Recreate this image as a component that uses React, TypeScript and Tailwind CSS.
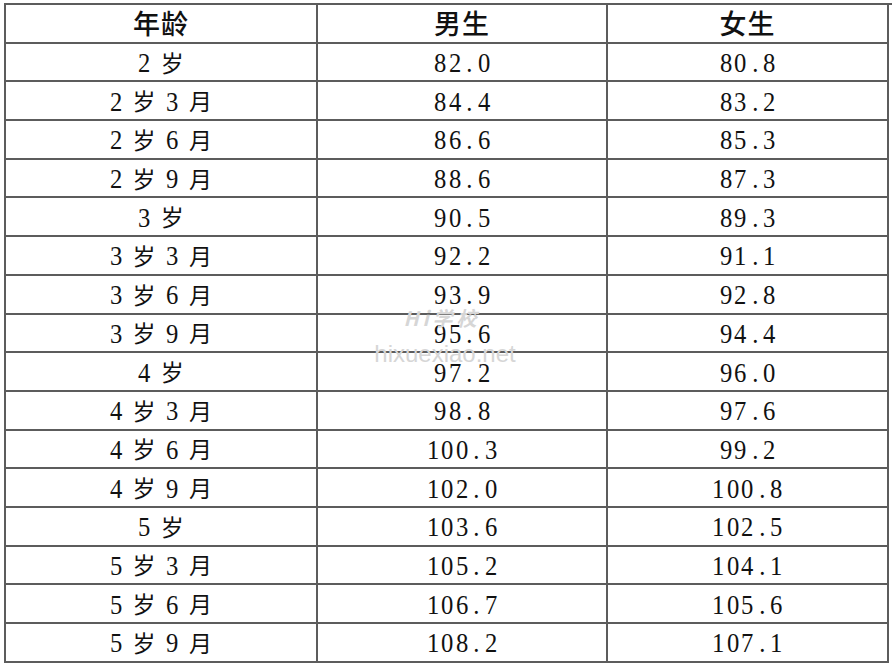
import React from 'react';

const rows: [string, string, string][] = [
  ['2 岁', '82.0', '80.8'],
  ['2 岁 3 月', '84.4', '83.2'],
  ['2 岁 6 月', '86.6', '85.3'],
  ['2 岁 9 月', '88.6', '87.3'],
  ['3 岁', '90.5', '89.3'],
  ['3 岁 3 月', '92.2', '91.1'],
  ['3 岁 6 月', '93.9', '92.8'],
  ['3 岁 9 月', '95.6', '94.4'],
  ['4 岁', '97.2', '96.0'],
  ['4 岁 3 月', '98.8', '97.6'],
  ['4 岁 6 月', '100.3', '99.2'],
  ['4 岁 9 月', '102.0', '100.8'],
  ['5 岁', '103.6', '102.5'],
  ['5 岁 3 月', '105.2', '104.1'],
  ['5 岁 6 月', '106.7', '105.6'],
  ['5 岁 9 月', '108.2', '107.1'],
];

// each glyph gets its own box so digits and the period sit on an even pitch
function Spaced({ text }: { text: string }) {
  return (
    <span className="inline-flex items-center">
      {text.split('').map((ch, i) => {
        if (ch === ' ') return <span key={i} className="inline-block w-[8px]" />;
        if (/[0-9.]/.test(ch))
          return (
            <span key={i} className="inline-block w-[14.5px] text-center text-[28px] leading-none scale-x-[0.88]" style={{ fontFamily: '"Liberation Serif", serif' }}>
              {ch}
            </span>
          );
        return (
          <span key={i} className="inline-block w-[26px] text-center text-[23px] leading-none -mt-[2px]" style={{ fontFamily: '"Noto Sans CJK SC", sans-serif' }}>
            {ch}
          </span>
        );
      })}
    </span>
  );
}

export default function App() {
  return (
    <div className="w-[892px] h-[666px] bg-white relative overflow-hidden text-[#111]" style={{ fontFamily: '"Liberation Serif", "Noto Sans CJK SC", serif' }}>
      <div className="ml-[4px] mt-[3px] grid grid-cols-[312px_290px_281px] border-l-2 border-t-2 border-[#5c5c5c]">
        {['年龄', '男生', '女生'].map((h) => (
          <div key={h} className="h-[38.7px] border-r-2 border-b-2 border-[#5c5c5c] flex items-center justify-center pb-[2px]">
            <span className="text-[27px] font-medium leading-none tracking-[1px]" style={{ fontFamily: '"Noto Sans CJK SC", sans-serif' }}>{h}</span>
          </div>
        ))}
        {rows.map((r) =>
          r.map((c, j) => (
            <div key={r[0] + j} className="h-[38.7px] border-r-2 border-b-2 border-[#5c5c5c] flex items-center justify-center pt-[2px]">
              <Spaced text={c} />
            </div>
          ))
        )}
      </div>

      {/* watermark */}
      <div className="absolute left-[372px] top-[308px] w-[146px] flex flex-col items-center pointer-events-none">
        <span className="text-[20px] italic font-bold text-[#d6d6d6] leading-none tracking-[4px] ml-[-6px]" style={{ fontFamily: '"Noto Sans CJK SC", sans-serif' }}>Hi学校</span>
        <span className="mt-[14px] text-[24px] text-[#d6d6d6] leading-none" style={{ fontFamily: '"Liberation Sans", Arial, sans-serif' }}>hixuexiao.net</span>
      </div>
    </div>
  );
}
